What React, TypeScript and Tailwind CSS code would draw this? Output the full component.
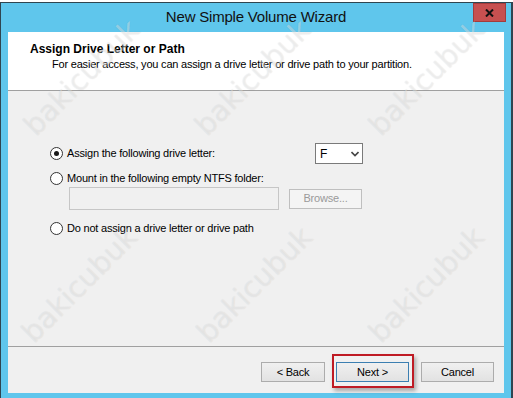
import React from "react";

const font = "font-['Liberation_Sans',Arial,sans-serif]";

function Radio({ checked = false }: { checked?: boolean }) {
  return (
    <span className="w-[13px] h-[13px] rounded-full border border-[#333333] bg-white flex items-center justify-center flex-shrink-0">
      {checked && <span className="w-[5px] h-[5px] rounded-full bg-[#1a1a1a]" />}
    </span>
  );
}

function WinButton({ label, active = false, w }: { label: string; active?: boolean; w: string }) {
  return (
    <button
      className={`${w} h-[20px] flex items-center justify-center text-[11px] tracking-[-0.2px] text-black bg-gradient-to-b from-[#f0f0f0] to-[#e2e2e2] border ${
        active ? "border-[#3c7fb1]" : "border-[#acacac]"
      }`}
    >
      {label}
    </button>
  );
}

const marks = [
  { x: "left-[82px]", y: "top-[78px]" },
  { x: "left-[253px]", y: "top-[78px]" },
  { x: "left-[427px]", y: "top-[78px]" },
  { x: "left-[80px]", y: "top-[285px]" },
  { x: "left-[255px]", y: "top-[285px]" },
  { x: "left-[427px]", y: "top-[285px]" },
];

export default function App() {
  return (
    <div className={`w-[513px] h-[398px] bg-white overflow-hidden relative ${font}`}>
      <div className="h-[2px] bg-white" />

      {/* Window */}
      <div className="relative h-[396px] flex flex-col bg-[#5fc6ec] border-t border-l border-r-2 border-[#2f4550] pl-[7px] pr-[7px] pb-[5px]">
        {/* Title bar */}
        <div className="h-[29px] flex items-center justify-center">
          <span className="text-[15px] tracking-[-0.2px] text-[#111111]">New Simple Volume Wizard</span>
        </div>
        <button className="absolute top-0 right-[5px] w-[33px] h-[19px] bg-[#c75050] border border-[#a33c3c] flex items-center justify-center">
          <svg className="w-[9px] h-[8px]" viewBox="0 0 9 8">
            <path d="M1 0.5 L8 7.5 M8 0.5 L1 7.5" stroke="#111" strokeWidth={2} />
          </svg>
        </button>

        {/* Header */}
        <div className="h-[59px] bg-white border-b border-[#a0a0a0] pt-[10px]">
          <p className="pl-[22px] text-[12px] leading-[15px] font-bold text-black">Assign Drive Letter or Path</p>
          <p className="pl-[44px] text-[11px] leading-[15px] tracking-[-0.2px] text-black">
            For easier access, you can assign a drive letter or drive path to your partition.
          </p>
        </div>

        {/* Body */}
        <div className="flex-1 bg-[#f0f0f0] border-b border-[#a0a0a0] pl-[42px] pt-[52px] text-[11px] tracking-[-0.2px] text-black">
          <div className="flex items-center h-[21px]">
            <div className="w-[265px] flex items-center gap-[4px]">
              <Radio checked />
              <span>Assign the following drive letter:</span>
            </div>
            <div className="w-[48px] h-[21px] bg-white border border-[#7a7a7a] flex items-center justify-between pl-[4px] pr-[3px]">
              <span className="text-[12px]">F</span>
              <svg className="w-[8px] h-[6px]" viewBox="0 0 8 6">
                <path d="M0.5 1 L4 4.5 L7.5 1" fill="none" stroke="#444" strokeWidth={1.6} />
              </svg>
            </div>
          </div>

          <div className="flex items-center gap-[4px] h-[16px] mt-[6px]">
            <Radio />
            <span>Mount in the following empty NTFS folder:</span>
          </div>

          <div className="flex items-center mt-[1px] ml-[19px] gap-[10px]">
            <div className="w-[210px] h-[23px] border border-[#c6c6c6] bg-[#f0f0f0]" />
            <div className="w-[73px] h-[20px] border border-[#bfbfbf] bg-[#f4f4f4] flex items-center justify-center text-[#9a9a9a]">
              Browse...
            </div>
          </div>

          <div className="flex items-center gap-[4px] h-[16px] mt-[10px]">
            <Radio />
            <span>Do not assign a drive letter or drive path</span>
          </div>
        </div>

        {/* Footer */}
        <div className="h-[46px] bg-[#f0f0f0] flex justify-end items-start pt-[15px] pr-[10px]">
          <WinButton label="< Back" w="w-[64px]" />
          <div className="w-[11px]" />
          <WinButton label="Next >" w="w-[73px]" active />
          <div className="w-[12px]" />
          <WinButton label="Cancel" w="w-[73px]" />
        </div>
      </div>

      {/* Highlight annotation */}
      <div className="absolute left-[332px] top-[354px] w-[82px] h-[34px] border-2 border-[#bf1b24] shadow-[2px_3px_4px_rgba(0,0,0,0.3)] pointer-events-none" />

      {/* Watermarks */}
      <div className="absolute inset-0 pointer-events-none">
        {marks.map((m, i) => (
          <span
            key={i}
            className={`absolute ${m.x} ${m.y} -translate-x-1/2 -translate-y-1/2 -rotate-[45deg] text-[29px] font-['DejaVu_Sans',sans-serif] text-white/40 [text-shadow:0_0_1px_rgba(0,0,0,0.12)] whitespace-nowrap`}
          >
            bakicubuk
          </span>
        ))}
      </div>
    </div>
  );
}
